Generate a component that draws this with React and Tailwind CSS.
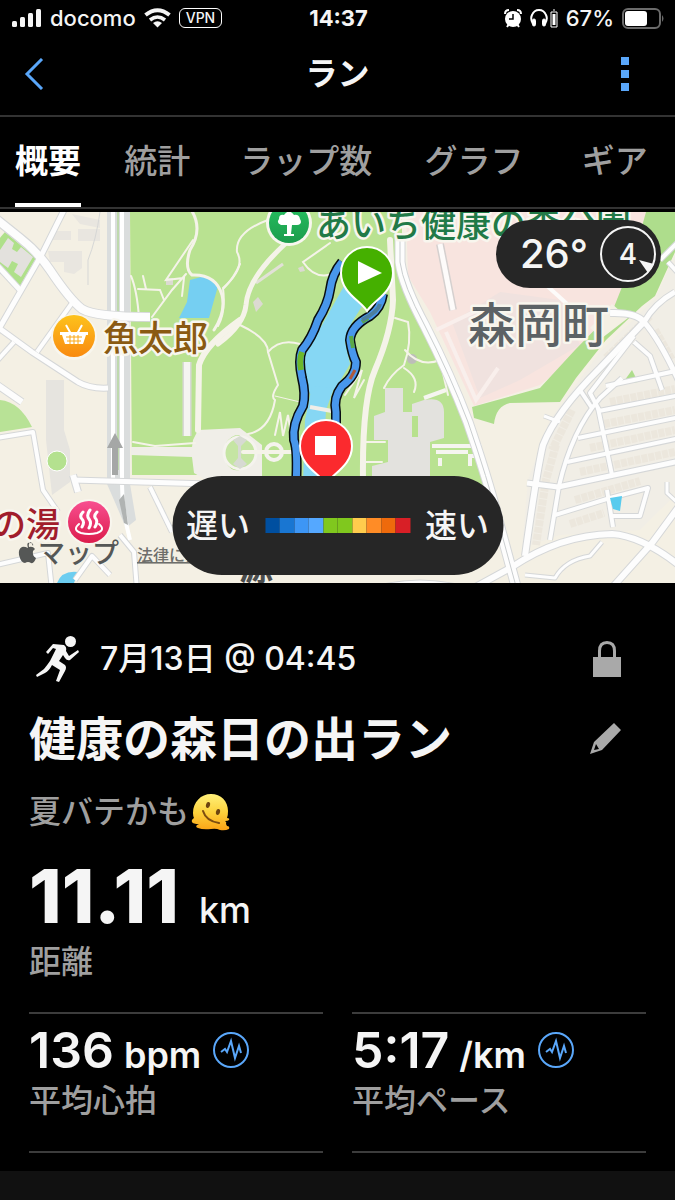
import clsx from "clsx";

const TABS = ["概要", "統計", "ラップ数", "グラフ", "ギア"];

const PACE_COLORS = [
  "bg-[#004fa0]",
  "bg-[#1976d2]",
  "bg-[#3d96f5]",
  "bg-[#55a8ff]",
  "bg-[#80c81e]",
  "bg-[#80c81e]",
  "bg-[#ffcc4d]",
  "bg-[#ff8c26]",
  "bg-[#ee6a0c]",
  "bg-[#d81f26]",
];

const STATS = [
  { value: "136", unit: "bpm", label: "平均心拍" },
  { value: "5:17", unit: "/km", label: "平均ペース" },
];

// [path, width] of every street with a grey casing
const STREETS = [
  ["M-5 218 L20 238 Q38 252 50 270 Q70 300 82 309 Q95 317 150 317", 8],
  ["M65 208 L42 254 L-4 334", 5],
  ["M-4 264 L20 290", 5],
  ["M-4 326 L32 352 L78 382 Q90 389 108 388", 5],
  ["M72 303 L37 352", 4],
  ["M14 342 L-4 362", 4],
  ["M-4 384 L22 402", 6],
  ["M-4 438 L33 432 L43 490 L58 512", 4],
  ["M73 480 L210 484", 5],
  ["M73 475 L78 492", 6],
  ["M150 487 L172 532", 4],
  ["M120 535 L134 552 L137 590", 4],
  ["M-4 565 L48 553 L52 590 M75 580 L92 556 L110 575", 4],
  ["M610 313 Q636 312 644 322 L600 368 Q556 412 543 445 Q537 470 525 556", 6],
  ["M675 292 Q655 303 644 322 Q660 340 680 384", 5],
  ["M634 336 L590 393 L599 410", 4],
  ["M580 390 L592 408 M622 378 L600 398 Q572 430 559 486 L550 540", 4],
  ["M634 342 L650 356 L662 390", 4],
  ["M606 386 L680 370", 4],
  ["M599 411 L680 395", 4],
  ["M578 438 L680 417", 4],
  ["M567 462 L680 438", 4],
  ["M527 483 L558 487 L680 461", 5],
  ["M555 515 L610 498 L648 488 L640 516 L612 516", 4],
  ["M598 408 L612 475 M607 490 L613 527", 4],
  ["M544 416 L560 422", 3],
  ["M660 260 L680 240 M668 262 L680 275", 4],
  ["M667 482 L667 493 L680 505", 3],
  ["M525 575 L555 578 Q565 560 590 556 L602 542", 3],
  ["M400 236 L400 262 Q403 285 425 326 Q450 375 468 422 Q488 480 498 520 L517 590", 9],
  ["M470 590 L512 567 Q560 535 612 534 Q642 536 680 566", 6],
  ["M610 590 L652 543 L680 505", 6],
  ["M370 590 Q420 575 470 590", 4],
];

const PARK_PATHS = [
  ["M190 208 Q204 228 190 250 Q184 268 192 275 Q216 274 222 295 Q226 312 214 330", 3],
  ["M240 264 Q234 278 224 288", 2],
  ["M131 276 Q137 290 139 318 M138 289 L160 290 L164 300 M143 276 L146 289 M152 317 L172 290 L186 274 M182 296 L184 278 L166 280 L193 240", 2],
  ["M240 320 Q205 345 199 365 L198 430", 6],
  ["M285 244 Q248 278 246 305 Q244 325 218 344", 5],
  ["M268 220 Q235 232 237 252 Q246 268 223 288 Q226 312 218 326", 2],
  ["M240 325 Q268 338 268 352 Q274 372 278 385 Q270 397 275 400 Q270 430 248 434", 2],
  ["M268 352 Q280 338 300 344", 2],
  ["M326 246 L303 262 Q315 280 332 274 M303 262 L330 243", 2],
  ["M275 396 L300 402", 1],
  ["M390 240 L393 300 Q392 330 375 370 Q362 400 363 480", 6],
  ["M395 318 L408 322 Q412 342 404 365 Q390 375 384 388 M404 368 Q420 378 414 392 M405 350 Q420 368 440 360 L448 395", 2],
  ["M133 442 L155 446 L195 443", 2],
  ["M275 435 L280 412 L283 436 L288 415 L291 434", 2],
  ["M345 395 L362 370 L354 398 L364 380", 2],
  ["M363 442 L385 442 M363 462 L382 462", 2],
  ["M243 452 H300", 4],
];

function PinShape({ x, y, color, children }) {
  return (
    <g transform={`translate(${x} ${y})`}>
      <path
        d="M0 38 C-6 28 -26 20 -26 0 A26 26 0 0 1 26 0 C26 20 6 28 0 38Z"
        fill={color}
        stroke="#fff"
        strokeWidth="2"
      />
      {children}
    </g>
  );
}

function MapLabel({ x, y, size, color, children }) {
  return (
    <text
      x={x}
      y={y}
      fontSize={size}
      fill={color}
      stroke="#f8f6ee"
      strokeWidth="5"
      strokeLinejoin="round"
      paintOrder="stroke"
      fontWeight="500"
    >
      {children}
    </text>
  );
}

function RouteMap() {
  const route =
    "M342 262 Q332 274 330 290 Q328 304 318 320 Q312 338 302 350 Q298 360 302 378 Q306 394 303 406 Q292 424 294 440 Q298 450 296 486";
  const routeBack =
    "M383 294 Q381 308 370 316 Q351 326 350 340 Q352 354 356 362 Q356 376 342 386 Q333 398 336 412 L336 430";

  return (
    <svg
      viewBox="0 212 675 371"
      preserveAspectRatio="xMidYMid slice"
      className="block h-[371px] w-full font-['Inter','Noto_Sans_CJK_JP',sans-serif]"
      role="img"
      aria-label="マップ"
    >
      <defs>
        <linearGradient id="shop" x1="0" y1="0" x2="0" y2="1">
          <stop offset="0" stopColor="#fdc21c" />
          <stop offset="1" stopColor="#f98a10" />
        </linearGradient>
        <linearGradient id="park" x1="0" y1="0" x2="0" y2="1">
          <stop offset="0" stopColor="#25c060" />
          <stop offset="1" stopColor="#1c9c4c" />
        </linearGradient>
        <linearGradient id="spa" x1="0" y1="0" x2="0" y2="1">
          <stop offset="0" stopColor="#f84f90" />
          <stop offset="1" stopColor="#dc1c4c" />
        </linearGradient>
      </defs>

      <rect x="0" y="212" width="675" height="371" fill="#f4f0e4" />

      {/* left town */}
      <path d="M5 232 L36 258 L20 286 L-2 268 V240Z" fill="#afe08a" />
      <path d="M8 238 L14 243 L12 249 L17 252 L21 247 L33 257 L21 277 L14 272 L18 264 L12 261 L8 268 L0 262 V250Z" fill="#e3e1dd" />
      <path d="M0 400 Q20 402 32 427 L0 432Z" fill="#b8e296" />
      <path d="M48 251 H82 V268 L74 274 L64 272 V262 H50Z M78 229 H100 V241 H78Z M52 231 H71 V240 H52Z M72 214 L100 220 V228 L80 224Z" fill="#e9e6e0" />
      <path d="M46 380 H64 V430 L70 450 V482 L52 495 L46 440Z" fill="#e6e4df" />
      <circle cx="57" cy="461" r="10" fill="#b4e18f" stroke="#fff" />
      <path d="M100 212 Q96 240 88 260 V285" fill="none" stroke="#d6d7d6" strokeWidth="1" />
      <path d="M57 583 Q62 570 78 572 L74 583Z" fill="#6ccdf0" />

      {/* park */}
      <path d="M130 212 H402 V270 L432 334 L468 412 L484 475 L484 500 H205 V475 H132Z" fill="#b9e291" />
      <path d="M131 447 L192 447 L193 440 L198 430 L240 428 L262 445 V480 H206 L194 473 L192 457 L131 455Z" fill="#f0eee8" />
      <path d="M226 443 Q232 434 240 435 L230 450Z M226 463 L230 456 L240 470 Q232 472 226 463Z" fill="#b3df89" />
      <circle cx="240" cy="453" r="16" fill="#c5e5a3" stroke="#f5f3ee" strokeWidth="3" />
      <path d="M233 440 L240 436 L247 440 L241 446 V458 L247 464 L240 469 L233 464 L238 458 V446Z" fill="#d7dad2" />
      <circle cx="274" cy="452" r="8" fill="none" stroke="#f5f3ee" strokeWidth="4" />
      <path d="M190 280 L205 276 L218 286 L209 318 H179 L187 302Z" fill="#75cff2" />
      <path d="M344 286 L366 300 L352 322 L345 342 L350 364 L336 388 L316 402 L306 388 L304 354 L322 325Z" fill="#86d7f4" />
      <path d="M312 386 L334 388 L326 410 L322 484 H303 L305 420Z" fill="#86d7f4" />
      <path d="M310 407 L332 411" stroke="#f0eee8" strokeWidth="4" />
      <path d="M256 283 L283 264" stroke="#e2e1d7" strokeWidth="3" />
      <path d="M166 278 H173 V285 H166Z M253 302 L258 297 L263 304 L256 312Z M298 268 L303 266 L305 271 L300 272Z" fill="#dcdad2" />
      <path
        d="M385 388 H403 V412 H412 V404 L424 400 Q444 396 444 412 V438 L430 442 V482 H372 V466 L388 462 V440 H374 V416 L385 412Z"
        fill="#e3e2de"
      />
      <path d="M412 416 H418 V437 H412Z" fill="#b7e18d" />
      <path d="M432 446 H480 V456 H470 V466 M436 452 H468 M440 458 V466 M424 398 L446 390" fill="none" stroke="#f6f5f0" strokeWidth="4" />
      <circle cx="412" cy="359" r="5" fill="#bdbdb9" />
      {PARK_PATHS.map(([d, width]) => (
        <path key={d} d={d} fill="none" stroke="#f5f3e9" strokeWidth={width} strokeLinecap="round" />
      ))}
      <path d="M187 362 V436" stroke="#d8d8d6" strokeWidth="9" />
      <path d="M187 362 V436" stroke="#f5f4f1" strokeWidth="6" />

      {/* hospital block and green belt */}
      <path d="M406 212 H646 L625 300 L590 345 L540 385 L474 406 L430 312 L408 276Z" fill="#f8e4df" />
      <path d="M452 322 L500 292 L560 300 L580 345 L520 380 L480 398Z" fill="#f0e2df" />
      <path d="M436 330 L478 310 M446 332 L476 400 L498 368" fill="none" stroke="#f9efec" strokeWidth="4" />
      <path d="M440 244 L453 310" stroke="#d5d0cf" strokeWidth="8" />
      <path d="M440 244 L453 310" stroke="#fdfbfa" strokeWidth="5" />
      <path d="M545 284 L566 303 L575 330" fill="none" stroke="#fdfbfa" strokeWidth="4" />
      <path
        d="M646 212 H675 V252 L655 296 L642 306 L606 340 L576 378 L560 402 L510 403 Q496 406 494 424 L474 418 L472 407 L540 388 L575 350 L612 312 L632 262Z"
        fill="#aedd8c"
      />
      <path d="M590 328 L612 304 L628 318 L602 338Z" fill="#f4f0e4" />
      <path d="M675 255 L656 298 L600 352 L550 420 L528 480 L522 548 L560 535 L640 530 L675 495Z" fill="#f1eee6" />
      <path d="M632 370 L638 382 L622 384Z" fill="#aedd8c" />
      {/* rows of houses */}
      <path
        d="M606 358 L650 316 M655 330 L672 360 M610 402 L675 389 M604 424 L675 410 M590 448 L675 430 M580 472 L675 452 M575 500 L640 481 M556 445 L546 480 L536 545 M572 410 L552 450 M570 524 L604 513"
        stroke="#ece7dd"
        strokeWidth="8"
        strokeDasharray="6 1"
        fill="none"
      />

      {/* expressway on the left */}
      <path d="M107 212 H130 V484 L136 520 L126 528 L114 500 L107 484Z" fill="#dadddd" />
      <path d="M113 212 V480 M122 212 V484 Q122 510 130 540" fill="none" stroke="#fff" strokeWidth="4" />
      <path d="M118 212 V470" stroke="#bfd9ae" strokeWidth="2" />
      {STREETS.map(([d, width]) => (
        <path key={d} d={d} fill="none" stroke="#d5d7d8" strokeWidth={width + 2} strokeLinejoin="round" />
      ))}
      {STREETS.map(([d, width]) => (
        <path key={d} d={d} fill="none" stroke="#fdfdfd" strokeWidth={width} strokeLinejoin="round" />
      ))}
      <path
        d="M400 236 L400 262 Q403 285 425 326 Q450 375 468 422 Q488 480 498 520 L517 590"
        fill="none"
        stroke="#c9cdcf"
        strokeWidth="1"
      />
      <path d="M610 498 L622 496 L620 511 L613 509Z" fill="#58cbee" />
      <path d="M112 475 V448 H107 L115 433 L123 448 H118 V475Z" fill="#a5a7a6" />
      <path d="M119 500 L124 494 L128 525 L124 523Z" fill="#b0b3b2" />

      {/* run track */}
      {[route, routeBack].map((d) => (
        <g key={d} fill="none" strokeLinejoin="round">
          <path d={d} stroke="#080d12" strokeWidth="10" />
          <path d={d} stroke="#4897ec" strokeWidth="7" />
        </g>
      ))}
      <path d="M302 352 Q299 360 301 370" fill="none" stroke="#6cb82c" strokeWidth="6" />
      <path d="M368 318 L362 322 M351 336 L353 348" stroke="#5aa848" strokeWidth="4" />
      <path d="M355 370 L350 379" stroke="#b0593c" strokeWidth="3" />
      <path d="M380 304 Q378 312 362 320" fill="none" stroke="#4d7f9d" strokeWidth="4" />

      {/* places */}
      <circle cx="289" cy="223" r="23" fill="#f8f6ee" />
      <circle cx="289" cy="223" r="20" fill="url(#park)" />
      <path d="M287 225 H281 Q276 223 279 219 Q279 214 284 215 Q289 208 294 215 Q299 214 300 219 Q303 224 297 225 H292 L291 234 H294 V236 H284 V234 H287Z" fill="#fff" />
      <MapLabel x={316} y={237} size={35} color="#217a47">
        あいち健康の森公園
      </MapLabel>

      <circle cx="74" cy="337" r="23" fill="#f8f6ee" />
      <circle cx="74" cy="336" r="21" fill="url(#shop)" />
      <path d="M60 332 H88 V335 H86 L83 344 H65 L62 335 H60Z" fill="#fff" />
      <path d="M66 325 L71 334 M82 325 L77 334" stroke="#fff" strokeWidth="2" />
      <path d="M66 337 H82 M67 341 H81 M70 335 V344 M74 335 V344 M78 335 V344" stroke="#fba817" strokeWidth="1" />
      <MapLabel x={103} y={351} size={35} color="#8a5a12">
        魚太郎
      </MapLabel>

      <MapLabel x={468} y={342} size={47} color="#5c6265">
        森岡町
      </MapLabel>

      <MapLabel x={-8} y={537} size={34} color="#a11d2c">
        の湯
      </MapLabel>
      <circle cx="89" cy="522" r="23" fill="#f8f6ee" />
      <circle cx="89" cy="522" r="21" fill="url(#spa)" />
      <g fill="none" stroke="#fff" strokeLinecap="round">
        <path d="M83 512 Q79 516 82 519 Q85 522 82 527 M90 510 Q86 515 89 519 Q92 523 89 528 M97 512 Q93 516 96 519 Q98 522 95 527" strokeWidth="3" />
        <path d="M79 524 Q72 530 81 533 Q89 535 97 533 Q106 530 99 524" strokeWidth="2" />
      </g>

      <g fill="#555756">
        <path d="M33 546 Q34 543 30 543 Q26 542 28 548 Q24 546 22 547 Q18 549 19 555 Q21 563 25 563 Q28 561 31 563 Q34 564 36 558 Q32 556 33 551 L35 549 Q33 546 29 547 Q28 543 31 542Z" />
        <text x="38" y="563" fontSize="27" fontWeight="500">
          マップ
        </text>
      </g>
      <a href="#legal">
        <text x="137" y="561" fontSize="16" fontWeight="500" fill="#6d6e6b" textDecoration="underline">
          法律に基づく情報
        </text>
      </a>
      <text x="239" y="580" fontSize="34" fontWeight="700" fill="#4a4c4c">
        源
      </text>

      <PinShape x={367} y={273} color="#45b000">
        <path d="M-9 -12 L15 0 L-9 11Z" fill="#fff" />
      </PinShape>
      <PinShape x={326} y={446} color="#fb2a2e">
        <rect x="-11" y="-10" width="21" height="19" fill="#fff" />
      </PinShape>
    </svg>
  );
}

function StatusBar() {
  return (
    <div className="grid h-9 grid-cols-[1fr_auto_1fr] items-center pl-3 pr-[10px] text-[22px] font-medium leading-9">
      <div className="flex items-center gap-2">
        <svg width="30" height="19" viewBox="0 0 30 19" fill="currentColor">
          <rect x="0" y="12" width="5" height="6" rx="1.5" />
          <rect x="8" y="8" width="5" height="10" rx="1.5" />
          <rect x="16" y="4" width="5" height="14" rx="1.5" />
          <rect x="24" y="0" width="5" height="18" rx="1.5" />
        </svg>
        <span>docomo</span>
        <svg width="27" height="20" viewBox="0 0 27 20" fill="none" stroke="currentColor" strokeWidth="4">
          <path d="M1.5 7 Q13.5 -2.5 25.5 7" />
          <path d="M6 12 Q13.5 6 21 12" strokeWidth="3.6" />
          <path d="M9 15 Q13.5 11.5 18 15 L13.5 19.5Z" fill="currentColor" stroke="none" />
        </svg>
        <span className="flex h-5 items-center rounded-md border border-white px-[6px] text-sm font-medium">VPN</span>
      </div>
      <span className="font-bold">14:37</span>
      <div className="flex items-center justify-end gap-2">
        <svg width="18" height="19" viewBox="0 0 18 19">
          <path d="M1 5 Q1 1 5 1 M17 5 Q17 1 13 1 M3 18 L5 15 M15 18 L13 15" stroke="#fff" strokeWidth="2" fill="none" />
          <circle cx="9" cy="10" r="8" fill="#fff" />
          <path d="M9 5 V10 H5" stroke="#000" strokeWidth="1.5" fill="none" />
        </svg>
        <svg width="28" height="19" viewBox="0 0 28 19" fill="none" stroke="#fff">
          <path d="M3 15 Q0 10 2 6 Q4 1 9 1 Q14 1 16 6 Q18 10 15 15" strokeWidth="2" />
          <rect x="2.5" y="10" width="3" height="7" rx="1.5" fill="#fff" />
          <rect x="12.5" y="10" width="3" height="7" rx="1.5" fill="#fff" />
          <path d="M21 3 H27 V18 H21Z M23 1 H25" strokeWidth="1" />
          <path d="M24 5 V16" strokeWidth="3" />
        </svg>
        <span>67%</span>
        <svg width="43" height="21" viewBox="0 0 43 21">
          <rect x="1" y="1" width="37" height="19" rx="5" fill="none" stroke="#6b6b6b" strokeWidth="2" />
          <rect x="3" y="3" width="22" height="15" rx="3" fill="#fff" />
          <path d="M40 7 Q43 10.5 40 14Z" fill="#6b6b6b" />
        </svg>
      </div>
    </div>
  );
}

function MeltingFace() {
  return (
    <svg width="40" height="40" viewBox="0 0 40 40" role="img" aria-label="とろける顔">
      <defs>
        <linearGradient id="melt" x1="0" y1="0" x2="0" y2="1">
          <stop offset="0" stopColor="#fff07a" />
          <stop offset="0.5" stopColor="#fdd23c" />
          <stop offset="1" stopColor="#fba316" />
        </linearGradient>
      </defs>
      <path
        d="M2 21 C2 10 10 2 20 2 C30 2 37 9 37 19 Q37 24 36 26 Q39 26 38 28 Q37 29 34 29 Q36 30 35 32 L36 34 Q39 34 38 37 Q34 39 29 38 Q25 36 20 37 Q12 38 7 36 Q4 35 6 33 L8 32 Q2 32 1 30 Q0 28 3 26 Q2 24 2 21Z"
        fill="url(#melt)"
      />
      <ellipse cx="17" cy="13" rx="2" ry="3" fill="#6d4410" transform="rotate(15 17 13)" />
      <ellipse cx="27" cy="20" rx="2" ry="3" fill="#6d4410" transform="rotate(15 27 20)" />
      <path d="M12 19 Q15 29 28 31" fill="none" stroke="#7c4c10" strokeWidth="2" strokeLinecap="round" />
    </svg>
  );
}

function Stat({ value, unit, label }) {
  return (
    <div className="border-t-2 border-[#3c3c3c] pb-[30px] pt-2">
      <div className="flex items-center gap-3">
        <p className="flex items-baseline gap-[10px] text-[50px] font-semibold leading-[56px]">
          {value}
          <span className="text-4xl leading-none">{unit}</span>
        </p>
        <button type="button" aria-label={`${label}のグラフ`} className="text-[#5aa7fa]">
          <svg width="36" height="36" viewBox="0 0 36 36" fill="none" stroke="currentColor" strokeWidth="2">
            <circle cx="18" cy="18" r="17" />
            <path d="M8 20 L12 17 L14 20 L18 9 L22 26 L26 14 L28 21" />
          </svg>
        </button>
      </div>
      <p className="mt-[3px] text-[32px] font-medium leading-10 text-[#9f9f9f]">{label}</p>
    </div>
  );
}

function App() {
  return (
    <div className="flex min-h-screen flex-col bg-black font-['Inter','Noto_Sans_CJK_JP',sans-serif] text-[#f5f5f5]">
      <StatusBar />

      <header className="grid h-[81px] grid-cols-[1fr_auto_1fr] items-center border-b-2 border-[#333] px-6 pb-1">
        <button type="button" aria-label="戻る" className="justify-self-start text-[#5aa7fa]">
          <svg width="20" height="32" viewBox="0 0 20 32" fill="none" stroke="currentColor" strokeWidth="3">
            <path d="M18 1 L3 16 L18 31" />
          </svg>
        </button>
        <h1 className="text-[32px] font-bold leading-10">ラン</h1>
        <button type="button" aria-label="メニュー" className="justify-self-end px-[22px] text-[#5aa7fa]">
          <svg width="8" height="34" viewBox="0 0 8 34" fill="currentColor">
            <path d="M0 0 H8 V8 H0Z M0 13 H8 V21 H0Z M0 26 H8 V34 H0Z" />
          </svg>
        </button>
      </header>

      <nav role="tablist" className="mb-[3px] grid h-[92px] grid-cols-[109fr_116fr_184fr_157fr_93fr] border-b-2 border-[#333] pl-[15px]">
        {TABS.map((tab, index) => (
          <button
            key={tab}
            type="button"
            role="tab"
            aria-selected={index === 0}
            className={clsx(
              "justify-self-start whitespace-nowrap border-b-4 pt-1 text-[33px]",
              index === 0 ? "border-white font-bold text-white" : "border-transparent font-medium text-[#9f9f9f]"
            )}
          >
            {tab}
          </button>
        ))}
      </nav>

      <section className="relative overflow-hidden">
        <RouteMap />
        <div className="absolute right-[14px] top-2 flex h-[68px] items-center gap-3 rounded-full bg-[#262626] pl-6 pr-[5px]">
          <span className="text-[40px] font-medium leading-none">26°</span>
          <span className="relative flex h-14 w-14 items-center justify-center rounded-full border-2 border-[#f5f5f5] text-[28px] font-medium">
            4
            <svg viewBox="0 0 56 56" className="absolute -left-0.5 -top-0.5 h-14 w-14" fill="currentColor">
              <path d="M39 34 L54 38 L48 47Z" />
            </svg>
          </span>
        </div>
        <div className="absolute bottom-2 left-1/2 flex h-[99px] -translate-x-1/2 items-center gap-[15px] whitespace-nowrap rounded-full bg-[#262626] px-[14px] text-[32px] font-medium">
          <span>遅い</span>
          <div className="flex h-[15px] w-[145px]">
            {PACE_COLORS.map((color, index) => (
              <span key={index} className={clsx("flex-1", color)} />
            ))}
          </div>
          <span>速い</span>
        </div>
      </section>

      <main className="flex-1 px-[29px] pt-[52px]">
        <div className="flex h-12 items-center">
          <svg width="44" height="48" viewBox="0 0 44 48" fill="currentColor" className="ml-[7px]">
            <circle cx="34.5" cy="6.5" r="5.5" />
            <path d="M17 9 L28 10 Q31 12 30 16 L33 21 L42 15 L43 17 L34 25 Q31 26 29 23 L27 20 L23 26 L29 30 Q31 32 29 36 L23 47 L20 46 L24 35 L16 30 Q13 36 9 38 L1 42 L0 40 L8 34 Q12 29 14 26 L20 14 L17 13 L12 19 L10 17Z" />
          </svg>
          <p className="ml-5 text-[32px] font-medium leading-10">7月13日 @ 04:45</p>
          <svg width="28" height="36" viewBox="0 0 28 36" fill="#a9a9a9" className="ml-auto mr-[25px]" role="img" aria-label="非公開">
            <path d="M0 16 H5 V10 Q5 0 14 0 Q23 0 23 10 V16 H28 V36 H0Z M8 16 H20 V10 Q20 3 14 3 Q8 3 8 10Z" fillRule="evenodd" />
          </svg>
        </div>

        <div className="mt-7 flex items-center justify-between">
          <h2 className="text-[47px] font-bold leading-[56px]">健康の森日の出ラン</h2>
          <button type="button" aria-label="編集" className="mr-6">
            <svg width="32" height="32" viewBox="0 0 32 32" fill="#a9a9a9">
              <path d="M0 31 L4 19 L24 0 L31 7 L12 27Z M4 27 L9 26 L6 21Z" fillRule="evenodd" />
            </svg>
          </button>
        </div>

        <p className="mt-[25px] flex items-center gap-0.5 text-[32px] font-medium leading-10 text-[#9f9f9f]">
          夏バテかも
          <MeltingFace />
        </p>

        <p className="mt-7 flex items-baseline gap-5 text-[74px] font-extrabold leading-[72px]">
          11.11
          <span className="text-4xl font-medium leading-none">km</span>
        </p>
        <p className="mt-[10px] text-[32px] font-medium leading-10 text-[#9f9f9f]">距離</p>

        <div className="mt-[30px] grid grid-cols-2 gap-x-[29px]">
          {STATS.map((stat) => (
            <Stat key={stat.label} {...stat} />
          ))}
          <hr className="border-t-2 border-[#3c3c3c]" />
          <hr className="border-t-2 border-[#3c3c3c]" />
        </div>
      </main>

      <footer className="h-[29px] bg-[#111]" />
    </div>
  );
}

export default App;
